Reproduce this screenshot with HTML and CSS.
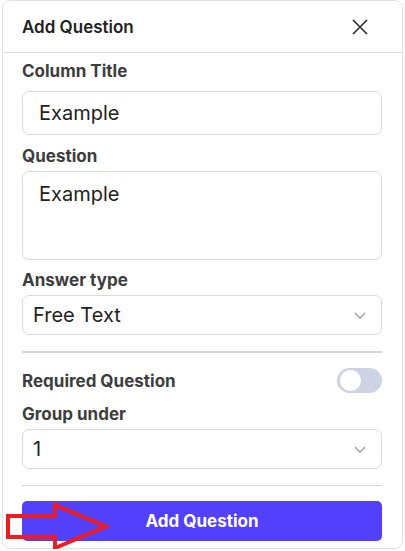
FILE: index.html
```html
<!DOCTYPE html>
<html lang="en">

<head>
    <meta charset="UTF-8" />
    <meta name="viewport" content="width=device-width, initial-scale=1.0" />
    <title>Add Question</title>
    <link rel="stylesheet" href="styles.css">
</head>

<body>
    <div class="panel">
        <div class="panel-header">
            <h2 class="panel-title">Add Question</h2>
            <button class="close-btn" type="button" aria-label="Close">
                <svg width="16" height="16" viewBox="0 0 16 16">
                    <path d="M1 1 L15 15 M15 1 L1 15" stroke="#333" stroke-width="1.7" fill="none" />
                </svg>
            </button>
        </div>

        <div class="panel-body">
            <label class="field-label">Column Title</label>
            <div class="input input-title">Example</div>

            <label class="field-label label-question">Question</label>
            <div class="input textarea">Example</div>

            <label class="field-label label-answer">Answer type</label>
            <div class="select">
                <span>Free Text</span>
                <svg class="chevron" width="12" height="7" viewBox="0 0 12 7">
                    <path d="M1 1 L6 6 L11 1" stroke="#999" stroke-width="1.3" fill="none" />
                </svg>
            </div>

            <div class="divider thick"></div>

            <div class="toggle-row">
                <span class="field-label">Required Question</span>
                <span class="toggle"><span class="knob"></span></span>
            </div>

            <label class="field-label label-group">Group under</label>
            <div class="select">
                <span>1</span>
                <svg class="chevron" width="12" height="7" viewBox="0 0 12 7">
                    <path d="M1 1 L6 6 L11 1" stroke="#999" stroke-width="1.3" fill="none" />
                </svg>
            </div>

            <div class="divider"></div>

            <button class="submit-btn" type="button">Add Question</button>
        </div>

        <!-- annotation arrow -->
        <svg class="arrow" width="110" height="50" viewBox="0 0 110 50">
            <polygon points="5,14 52,14 52,3 103,24.5 52,46 52,35 5,35" fill="none" stroke="#ed1c24"
                stroke-width="4" stroke-linejoin="miter" />
        </svg>
    </div>
</body>

</html>
```

FILE: styles.css
```css
body {
    margin: 0;
    background: #fff;
    font-family: Inter, "Noto Sans", sans-serif;
    color: #222;
}

.panel {
    position: relative;
    box-sizing: border-box;
    width: 401px;
    height: 549px;
    margin: 0 0 0 2px;
    border: 1px solid #e2e2e2;
    border-radius: 8px;
    background: #fff;
}

.panel-header {
    display: flex;
    align-items: center;
    justify-content: space-between;
    height: 52px;
    box-sizing: border-box;
    padding: 0 34px 0 19px;
    border-bottom: 1px solid #dcdcdc;
}

.panel-title {
    margin: 0;
    font-size: 17px;
    font-weight: 600;
    color: #222;
}

.close-btn {
    display: flex;
    padding: 0;
    border: none;
    background: none;
}

.panel-body {
    display: flex;
    flex-direction: column;
    padding: 8px 20px 0 19px;
}

.field-label {
    font-size: 17px;
    line-height: 20px;
    font-weight: 700;
    color: #3d3d3d;
}

.label-question {
    margin-top: 11px;
}

.label-answer {
    margin-top: 10px;
}

.label-group {
    margin-top: 11px;
}

.input,
.select {
    box-sizing: border-box;
    border: 1px solid #dadada;
    border-radius: 7px;
    font-size: 20px;
    color: #222;
}

.input {
    margin-top: 5px;
    padding: 0 16px;
}

.input-title {
    margin-top: 10px;
    height: 44px;
    line-height: 42px;
}

.textarea {
    height: 89px;
    padding-top: 10px;
    line-height: 24px;
}

.select {
    display: flex;
    align-items: center;
    justify-content: space-between;
    height: 40px;
    margin-top: 5px;
    padding: 0 15px 0 10px;
}

.chevron {
    margin-top: 1px;
}

.divider {
    height: 1px;
    margin-top: 16px;
    background: #d8d8d8;
}

.divider.thick {
    height: 2px;
    background: #d4d4d4;
}

.toggle-row {
    display: flex;
    align-items: center;
    justify-content: space-between;
    height: 25px;
    margin-top: 15px;
}

.toggle {
    display: flex;
    align-items: center;
    box-sizing: border-box;
    width: 45px;
    height: 25px;
    padding: 0 2px 0 3px;
    border-radius: 13px;
    background: #cdd3e2;
}

.knob {
    width: 21px;
    height: 21px;
    border-radius: 50%;
    background: #fff;
}

.submit-btn {
    height: 40px;
    margin-top: 15px;
    border: none;
    border-radius: 5px;
    background: #5240fd;
    color: #fff;
    font-family: inherit;
    font-size: 17px;
    font-weight: 700;
}

.arrow {
    position: absolute;
    left: 0;
    top: 501px;
}
```
